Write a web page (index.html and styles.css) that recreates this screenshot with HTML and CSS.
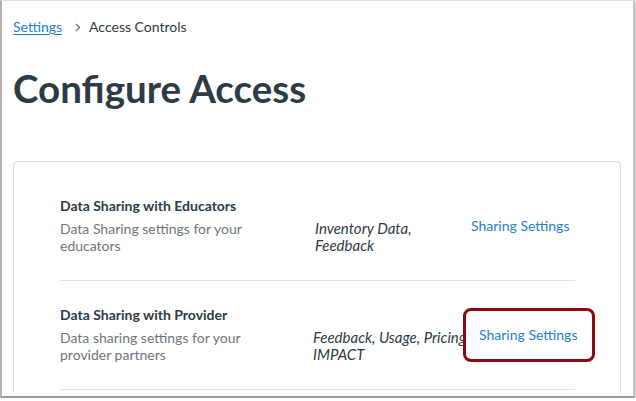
FILE: index.html
```html
<!DOCTYPE html>
<html lang="en">
<head>
<meta charset="utf-8">
<title>Configure Access</title>
<link rel="stylesheet" href="styles.css">
</head>
<body>
<div class="window">
  <div class="viewport">
    <nav class="breadcrumb">
      <a class="crumb-link" href="#">Settings</a>
      <svg class="chevron" width="6" height="9" viewBox="0 0 6 9"><path d="M1 1l3.5 3.5L1 8" fill="none" stroke="#6b7780" stroke-width="1.3"/></svg>
      <span class="crumb-current">Access Controls</span>
    </nav>
    <h1 class="page-title">Configure Access</h1>
    <section class="card">
      <div class="row">
        <div class="info">
          <div class="row-title">Data Sharing with Educators</div>
          <div class="row-desc">Data Sharing settings for your educators</div>
        </div>
        <div class="types">Inventory Data, Feedback</div>
        <div class="action"><a class="action-link" href="#">Sharing Settings</a></div>
      </div>
      <div class="row">
        <div class="info">
          <div class="row-title">Data Sharing with Provider</div>
          <div class="row-desc">Data sharing settings for your provider partners</div>
        </div>
        <div class="types types-shift"><span class="nowrap">Feedback, Usage, Pricing</span> IMPACT</div>
        <div class="action"><span class="highlight"><a class="action-link" href="#">Sharing Settings</a></span></div>
      </div>
      <div class="row"></div>
    </section>
  </div>
</div>
</body>
</html>
```

FILE: styles.css
```css
html, body {
  margin: 0;
  padding: 0;
  background: #ffffff;
}

body {
  font-family: Lato, "Noto Sans", sans-serif;
  color: #2d3b45;
}

.window {
  box-sizing: border-box;
  width: 635px;
  height: 398px;
  border-top: 1px solid #e2e2e2;
  border-left: 2px solid #b4b4b4;
  border-right: 2px solid #c4c4c4;
  border-bottom: 2px solid #9a9a9a;
  box-shadow: 1px 2px 2px rgba(0, 0, 0, 0.25);
  background: #ffffff;
}

.viewport {
  height: 392px;
  overflow: hidden;
  padding-left: 11px;
  padding-top: 16px;
  box-sizing: border-box;
}

.breadcrumb {
  display: flex;
  align-items: center;
  height: 20px;
  font-size: 14px;
  line-height: 20px;
}

.crumb-link {
  color: #1f7fcf;
  text-decoration: underline;
  text-underline-offset: 2px;
}

.chevron {
  margin: 0 8px 0 13px;
}

.crumb-current {
  color: #2d3b45;
}

.page-title {
  margin: 28px 0 0;
  font-size: 38.5px;
  font-weight: 700;
  line-height: 46px;
  color: #2d3b45;
}

.card {
  width: 608px;
  box-sizing: border-box;
  margin-top: 50px;
  border: 1px solid #dcdcdc;
  border-radius: 4px;
  padding: 10px 45px 0 46px;
}

.row {
  display: grid;
  grid-template-columns: 255px 156px 1fr;
  padding: 24px 0 26px;
  border-bottom: 1px solid #dfe1e3;
}

.info {
  padding-right: 28px;
}

.row-title {
  font-size: 14px;
  font-weight: 700;
  line-height: 20px;
  color: #2d3b45;
}

.row-desc {
  margin-top: 4px;
  font-size: 14px;
  line-height: 17px;
  color: #6b7780;
}

.types {
  align-self: end;
  max-width: 155px;
  font-size: 15px;
  font-style: italic;
  line-height: 17px;
  color: #2d3b45;
}

.nowrap {
  white-space: nowrap;
}

.types-shift {
  margin-left: -2px;
}

.action {
  align-self: center;
  margin-top: 2px;
  font-size: 14px;
  line-height: 20px;
  white-space: nowrap;
}

.action-link {
  color: #1f7fcf;
  text-decoration: none;
}

.highlight {
  position: relative;
  display: inline-block;
  margin-left: 8px;
}

.highlight::after {
  content: "";
  position: absolute;
  left: -16px;
  right: -18px;
  top: -17px;
  bottom: -17px;
  border: 3.5px solid #8b0a0e;
  border-radius: 8px;
}
```
